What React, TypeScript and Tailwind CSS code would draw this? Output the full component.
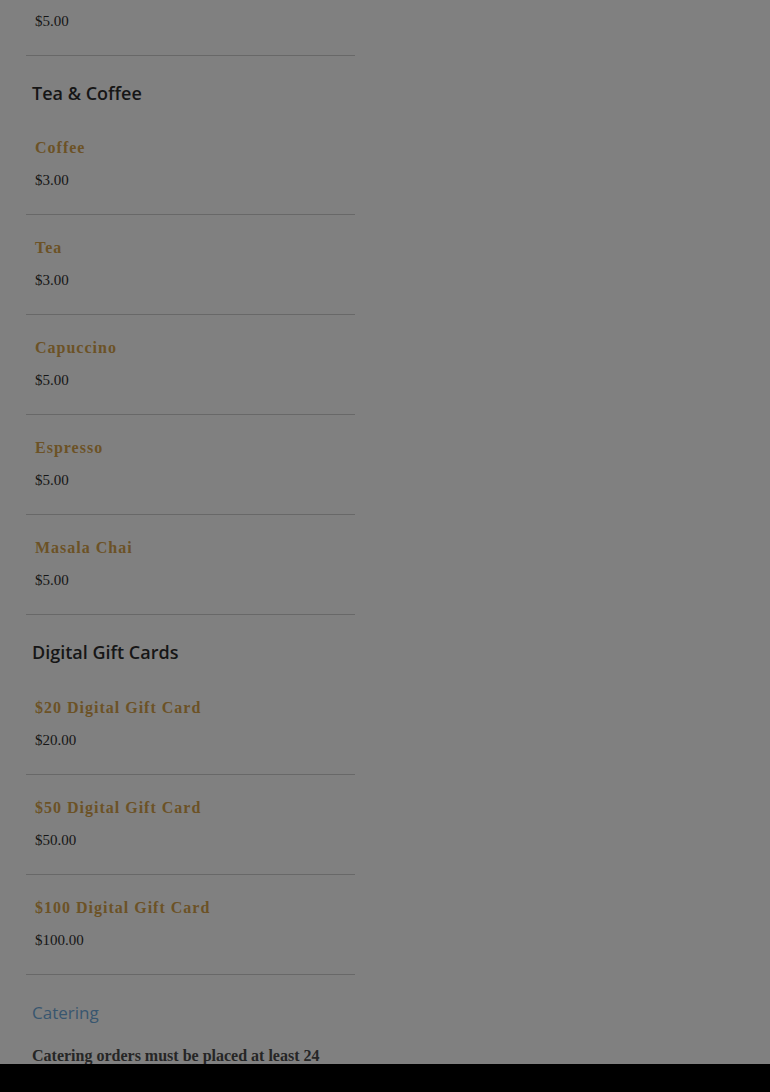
import React from "react";

type Item = { name: string; price: string };

const tea: Item[] = [
  { name: "Coffee", price: "$3.00" },
  { name: "Tea", price: "$3.00" },
  { name: "Capuccino", price: "$5.00" },
  { name: "Espresso", price: "$5.00" },
  { name: "Masala Chai", price: "$5.00" },
];

const gifts: Item[] = [
  { name: "$20 Digital Gift Card", price: "$20.00" },
  { name: "$50 Digital Gift Card", price: "$50.00" },
  { name: "$100 Digital Gift Card", price: "$100.00" },
];

function Row({ item }: { item: Item }) {
  return (
    <div className="h-[100px] border-b border-[#686868] px-[9px] pt-[22px]">
      <div className="text-[16px] leading-[22px] font-bold tracking-[1px] text-[#6c5226] [font-family:'Liberation_Serif',serif]">
        {item.name}
      </div>
      <div className="mt-[10px] text-[15px] leading-[22px] text-[#161616] [font-family:'Liberation_Serif',serif]">
        {item.price}
      </div>
    </div>
  );
}

function Heading({ children, tall }: { children: React.ReactNode; tall?: boolean }) {
  return (
    <div className={tall ? "h-[60px] px-[6px] pt-[25px]" : "h-[59px] px-[6px] pt-[25px]"}>
      <h2 className="text-[18px] leading-[24px] font-semibold text-[#161616] [font-family:'Open_Sans',sans-serif]">
        {children}
      </h2>
    </div>
  );
}

export default function App() {
  return (
    <div className="min-h-[1092px] w-full bg-[#808080]">
      <div className="ml-[26px] w-[329px]">
        <div className="h-[56px] border-b border-[#686868] px-[9px] pt-[10px]">
          <div className="text-[15px] leading-[22px] text-[#161616] [font-family:'Liberation_Serif',serif]">
            $5.00
          </div>
        </div>
        <Heading>Tea &amp; Coffee</Heading>
        {tea.map((t) => (
          <Row key={t.name} item={t} />
        ))}
        <Heading tall>Digital Gift Cards</Heading>
        {gifts.map((t) => (
          <Row key={t.name} item={t} />
        ))}
        <div className="px-[6px] pt-[26px]">
          <h3 className="text-[17px] leading-[24px] font-normal text-[#38566f] [font-family:'Open_Sans',sans-serif]">
            Catering
          </h3>
          <p className="mt-[20px] text-[16px] leading-[22px] font-bold text-[#262626] [font-family:'Liberation_Serif',serif]">
            Catering orders must be placed at least 24 hours in advance.
          </p>
        </div>
      </div>
      <div className="fixed bottom-0 left-0 h-[28px] w-full bg-black" />
    </div>
  );
}
